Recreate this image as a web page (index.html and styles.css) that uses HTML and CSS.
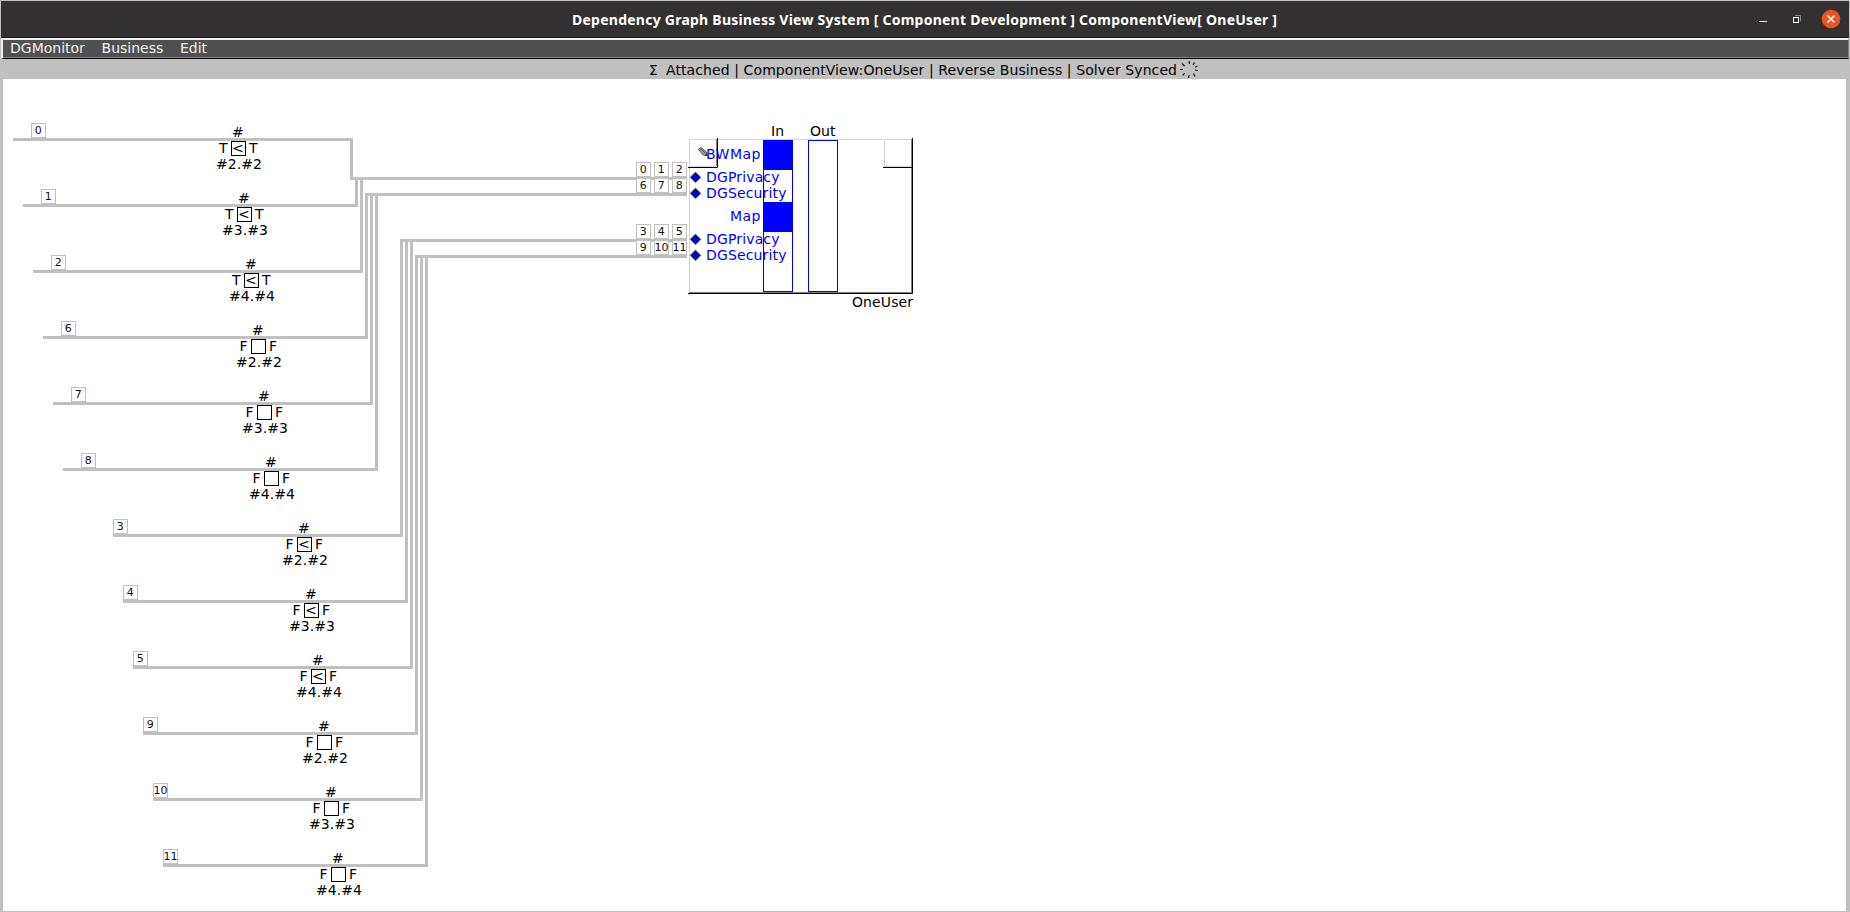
FILE: index.html
```
<!DOCTYPE html>
<html lang="en">
<head>
<meta charset="utf-8">
<title>Dependency Graph Business View System</title>
<link rel="stylesheet" href="styles.css">
</head>
<body>
<div class="window">
  <header class="titlebar">
    <span class="title"><svg class="title-text" width="705" height="36"><text x="0" y="24" textLength="705">Dependency Graph Business View System [ Component Development ] ComponentView[ OneUser ]</text></svg></span>
    <svg class="controls" width="90" height="36" viewBox="1755 1 90 36">
      <path d="M1759 21.5h8" stroke="#fff"/>
      <path d="M1795 15.5h5.5v6" fill="none" stroke="#8c8b8a"/>
      <rect x="1793.5" y="17.5" width="5" height="5" fill="none" stroke="#fff"/>
      <circle cx="1831" cy="19" r="9.3" fill="#e95420"/>
      <path d="M1827.5 15.5l7 7M1834.5 15.5l-7 7" stroke="#fff" stroke-width="1.5"/>
    </svg>
  </header>
  <nav class="menubar"><span>DGMonitor</span><span>Business</span><span>Edit</span></nav>
  <div class="status">
    <svg width="560" height="20" viewBox="645 59 560 20">
      <text x="649" y="75">Σ</text>
      <text x="666" y="75" textLength="511">Attached | ComponentView:OneUser | Reverse Business | Solver Synced</text>
      <path class="spinner" d="M1189.300 61v3M1194.500 62.500l-1.500 2.500M1197.500 66l-2.500 1.200M1198 70.500l-3-.5M1195 76.500l-1.500-3M1188.500 78l.5-3M1182.500 75.500l2.300-2.300M1180 69.500h3M1182 63.500l2.500 2.500"/>
    </svg>
  </div>
  <main class="canvas"><svg id="graph" width="1843" height="832" viewBox="3 79 1843 832"></svg></main>
</div>
<script src="graph.js"></script>
</body>
</html>
```

FILE: styles.css
```
body { margin: 0; font-family: "DejaVu Sans", sans-serif; font-size: 14px; overflow: hidden; }
.window { box-sizing: border-box; width: 1850px; height: 912px; border: 1px solid #c0c0c0; background: #c0c0c0; display: flex; flex-direction: column; }
.titlebar { height: 36px; background: #323030; border-bottom: 1px solid #1c1b1b; display: grid; grid-template-columns: 571px 1fr auto; }
.title { grid-column: 2; }
.title-text { display: block; font-family: "Noto Sans", sans-serif; font-weight: 700; font-size: 14px; }
.title-text text { fill: #fff; }
.controls { margin-right: 4px; display: block; }
.menubar { box-sizing: border-box; height: 21px; background: #505050; color: #f2f2f2; border-top: 2px solid #f0f0f0; border-left: 2px solid #f0f0f0; border-right: 1px solid #808080; border-bottom: 1px solid #000; box-shadow: inset 0 -1px #808080; padding-left: 7px; display: flex; gap: 16.7px; line-height: 16px; }
.status { height: 20px; display: flex; justify-content: center; }
.status svg, .canvas svg { display: block; }
.spinner { stroke: #111; stroke-width: 1.2; fill: none; }
.canvas { background: #fff; margin: 0 3px 0 2px; height: 832px; }
.wire { fill: none; stroke: #c0c0c0; stroke-width: 3; }
.tag rect { fill: #fff; stroke: #c0c0c0; }
.tag text { font-size: 11px; fill: #111; }
.slot { fill: none; stroke: #000; }
.port { fill: #00f; }
.frame-light { fill: none; stroke: #d3d3d3; }
.frame-mid { fill: none; stroke: #808080; }
.frame-dark { fill: none; stroke: #000; }
.column { fill: none; stroke: #00f; }
```

FILE: graph.js
```
const NS = 'http://www.w3.org/2000/svg';
const root = document.getElementById('graph');
function add(name, attrs, content, parent) {
  const e = document.createElementNS(NS, name);
  for (const k in attrs) e.setAttribute(k, attrs[k]);
  if (content) e.textContent = content;
  (parent || root).appendChild(e);
  return e;
}
const text = (x, y, s, w, cls) => add('text', Object.assign({ x, y }, w ? { textLength: w } : {}, cls ? { class: cls } : {}), s);
function tag(x, y, s) {
  const g = add('g', { class: 'tag' });
  add('rect', { x: x + .5, y: y + .5, width: 14, height: 14 }, '', g);
  add('text', { x: s.length > 1 ? x + .4 : x + 3.7, y: y + 11 }, s, g);
}
// id, wire start, tag x, node box x, wire turn, component entry, side label, symbol
const rows = [
  ['0', 13, 31, 231, 353, 177, 'T', '<'], ['1', 23, 41, 237, 358, 177, 'T', '<'],
  ['2', 33, 51, 244, 363, 177, 'T', '<'], ['6', 43, 61, 251, 368, 193, 'F', ''],
  ['7', 53, 71, 257, 373, 193, 'F', ''], ['8', 63, 81, 264, 378, 193, 'F', ''],
  ['3', 113, 113, 297, 403, 239, 'F', '<'], ['4', 123, 123, 304, 408, 239, 'F', '<'],
  ['5', 133, 133, 311, 413, 239, 'F', '<'], ['9', 143, 143, 317, 418, 255, 'F', ''],
  ['10', 153, 153, 324, 423, 255, 'F', ''], ['11', 163, 163, 331, 428, 255, 'F', '']
];
rows.forEach(([id, x, tx, bx, turn, entry, side, sym], i) => {
  const y = 138 + i * 66, n = 2 + i % 3;
  add('path', { class: 'wire', d: `M${x} ${y + 1.5}H${turn - 1.5}V${entry + 1.5}H687` });
  tag(tx, y - 15, id);
  add('rect', { class: 'slot', x: bx + .5, y: y + 3.5, width: 14, height: 14 });
  text(bx + 1, y - 1, '#');
  text(bx - (side === 'T' ? 12 : 11.5), y + 15, side);
  text(bx + 18, y + 15, side);
  if (sym) text(bx + 1, y + 15, sym);
  text(bx - 15, y + 31, `#${n}.#${n}`, 46);
});
[[162, '0', '1', '2'], [178, '6', '7', '8'], [224, '3', '4', '5'], [240, '9', '10', '11']]
  .forEach(([y, ...ids]) => ids.forEach((id, i) => tag(636 + i * 18, y, id)));

// component frame
add('path', { class: 'frame-light', d: 'M689.5 292V139.5H883M884.5 139V166.5H911M884 139.5H911M690 166.5H716' });
add('path', { class: 'frame-mid', d: 'M689 292.5H911.5V139M716.5 139V166' });
add('path', { class: 'frame-dark', d: 'M688 293.5H912.5V138M688 167.5H717.5V138M883 167.5H912' });
text(771, 136, 'In'); text(810, 136, 'Out'); text(852, 307, 'OneUser', 61);
add('rect', { class: 'column', x: 763.5, y: 140.5, width: 29, height: 151 });
add('rect', { class: 'column', x: 808.5, y: 140.5, width: 29, height: 151 });
add('rect', { class: 'port', x: 763, y: 140, width: 30, height: 30 });
add('rect', { class: 'port', x: 763, y: 202, width: 30, height: 30 });
text(706, 159, 'BWMap', 54.5, 'port'); text(730, 221, 'Map', 30.5, 'port');
[[182, 'DGPrivacy', 73.5], [198, 'DGSecurity', 80.5], [244, 'DGPrivacy', 73.5], [260, 'DGSecurity', 80.5]].forEach(([y, s, w]) => {
  text(706, y, s, w, 'port');
  const cy = y - 4.5;
  add('path', { d: `M695.5 ${cy - 6.5}l6.5 6.500l-6.500 6.500l-6.500-6.500z`, fill: '#d3d3d3' });
  add('path', { d: `M690 ${cy}l5.500-5.500l5.500 5.500`, fill: 'none', stroke: '#808080' });
  add('path', { d: `M695.5 ${cy - 5}l5 5l-5 5l-5-5z`, fill: '#000' });
  add('path', { d: `M695.5 ${cy - 4}l4 4l-4 4l-4-4z`, fill: '#00f' });
});
// pencil
add('path', { d: 'M698.500 149.500l2.500-2l5.500 4.500l.7 3.700l-4-.7z', fill: '#aaa49c', stroke: '#444', 'stroke-width': .9 });
add('path', { d: 'M700 148.500l5 4.500M705 155.300l2.200.4l-.4-2z', stroke: '#333', fill: '#222', 'stroke-width': .8 });
```
